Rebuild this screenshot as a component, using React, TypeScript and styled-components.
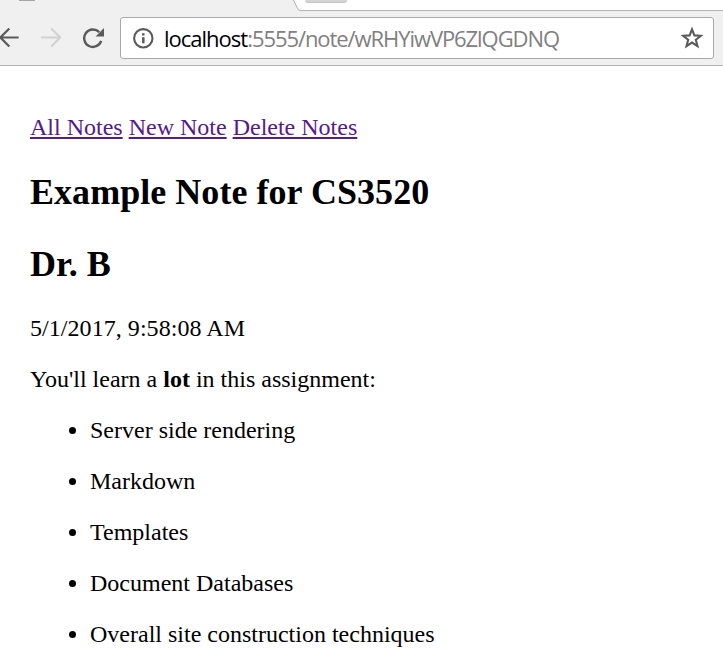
import React from "react";
import styled, { createGlobalStyle } from "styled-components";

const GlobalStyle = createGlobalStyle`
  body {
    margin: 0;
    background: #fff;
    color: #000;
    overflow: hidden;
  }
`;

const Window = styled.div`
  width: 723px;
  height: 656px;
  overflow: hidden;
`;

const Chrome = styled.header`
  box-sizing: border-box;
  height: 66px;
  background: #f0f0f0;
  border-bottom: 1px solid #b3b3b3;
`;

const TabStrip = styled.div`
  display: flex;
  height: 11px;
`;

const TabStub = styled.div`
  width: 16px;
  height: 1px;
  margin-left: 19px;
  background: #a6a6a6;
`;

const TabEdge = styled.svg`
  display: block;
  width: 10px;
  height: 11px;
  margin-left: 257px;
`;

const InactiveTab = styled.div`
  box-sizing: border-box;
  flex: 1;
  height: 11px;
  background: #fff;
  border-bottom: 1px solid #b3b3b3;
`;

const NewTabButton = styled.div`
  box-sizing: border-box;
  width: 42px;
  height: 3px;
  margin-left: 3px;
  background: #d4d4d4;
  border-bottom: 1px solid #c4c4c4;
  border-radius: 0 0 3px 3px;
`;

const Toolbar = styled.div`
  display: flex;
  align-items: center;
  box-sizing: border-box;
  height: 54px;
  padding: 0 9px 0 0;
`;

const Icon = styled.svg<{ $gap?: number }>`
  display: block;
  flex: none;
  margin-right: ${(p) => p.$gap ?? 0}px;
`;

const AddressBar = styled.div`
  display: flex;
  align-items: center;
  box-sizing: border-box;
  flex: 1;
  height: 42px;
  padding: 0 9px 0 11px;
  background: #fff;
  border: 1px solid #a9a9a9;
  border-radius: 3px;
`;

const Url = styled.div`
  flex: 1;
  font: 22px/30px "Open Sans", "Noto Sans", sans-serif;
  color: #808080;
  white-space: nowrap;
  letter-spacing: -1.07px;
`;

const Host = styled.span`
  color: #000;
  letter-spacing: -1px;
`;

const Page = styled.main`
  padding: 48px 30px 0;
  font: 24px/27px "Liberation Serif", "Times New Roman", serif;
`;

const NoteLink = styled.a`
  color: #551a8b;
  text-decoration: underline;
  text-decoration-thickness: 2px;
  text-underline-offset: 2px;
  text-decoration-skip-ink: none;
`;

const Heading = styled.h2`
  margin: 30px 0;
  font-size: 36px;
  line-height: 42px;
  letter-spacing: 0.04px;
`;

const Timestamp = styled.div`
  letter-spacing: 0.05px;
`;

const Paragraph = styled.p`
  margin: 24px 0;
`;

const List = styled.ul`
  margin: 24px 0;
  padding-left: 60px;
`;

const topics = [
  "Server side rendering",
  "Markdown",
  "Templates",
  "Document Databases",
  "Overall site construction techniques",
];

export default function App() {
  return (
    <Window>
      <GlobalStyle />
      <Chrome>
        <TabStrip>
          <TabStub />
          <TabEdge viewBox="0 0 10 11">
            <path d="M1.5 0L5.5 8.5Q6.3 10.5 8.2 10.5H10V0Z" fill="#fff" />
            <path d="M1.5 0L5.5 8.5Q6.3 10.5 8.2 10.5H10" fill="none" stroke="#b0b0b0" />
          </TabEdge>
          <InactiveTab>
            <NewTabButton />
          </InactiveTab>
        </TabStrip>
        <Toolbar>
          <Icon width="20" height="22" viewBox="0 0 20 22" $gap={20}>
            <path d="M18.7 10.5H.8M9.3 1.5L.4 10.5l8.9 9" fill="none" stroke="#5a5a5a" strokeWidth="2.2" />
          </Icon>
          <Icon width="22" height="22" viewBox="0 0 22 22" $gap={20}>
            <path d="M1.2 10.5H19.5M11.2 1.5l9 9-9 9" fill="none" stroke="#d2d2d2" strokeWidth="2.2" />
          </Icon>
          <Icon width="22" height="22" viewBox="0 0 22 22" $gap={16}>
            <path d="M19.2 13.8A8.7 8.7 0 1 1 17.2 5.2" fill="none" stroke="#5a5a5a" strokeWidth="2.4" />
            <path d="M22 1v8.4h-8.4Z" fill="#5a5a5a" />
          </Icon>
          <AddressBar>
            <Icon width="22" height="22" viewBox="0 0 22 22" $gap={10}>
              <circle cx="11.3" cy="11.3" r="9.2" fill="none" stroke="#5a5a5a" strokeWidth="2.1" />
              <path d="M11.3 6.2v2.4M11.3 10.2v6" stroke="#5a5a5a" strokeWidth="2.5" />
            </Icon>
            <Url>
              <Host>localhost</Host>:5555/note/wRHYiwVP6ZlQGDNQ
            </Url>
            <Icon width="24" height="24" viewBox="0 0 24 24">
              <path
                d="M12 3.4l2.4 6 6.4.4-5 4 1.7 6.3-5.5-3.5-5.5 3.5 1.7-6.3-5-4 6.4-.4Z"
                fill="none"
                stroke="#5a5a5a"
                strokeWidth="2.1"
              />
            </Icon>
          </AddressBar>
        </Toolbar>
      </Chrome>
      <Page>
        <nav>
          <NoteLink>All Notes</NoteLink> <NoteLink>New Note</NoteLink> <NoteLink>Delete Notes</NoteLink>
        </nav>
        <Heading>Example Note for CS3520</Heading>
        <Heading>Dr. B</Heading>
        <Timestamp>5/1/2017, 9:58:08 AM</Timestamp>
        <Paragraph>
          You'll learn a <b>lot</b> in this assignment:
        </Paragraph>
        <List>
          {topics.map((topic) => (
            <li key={topic}>
              <Paragraph>{topic}</Paragraph>
            </li>
          ))}
        </List>
      </Page>
    </Window>
  );
}
